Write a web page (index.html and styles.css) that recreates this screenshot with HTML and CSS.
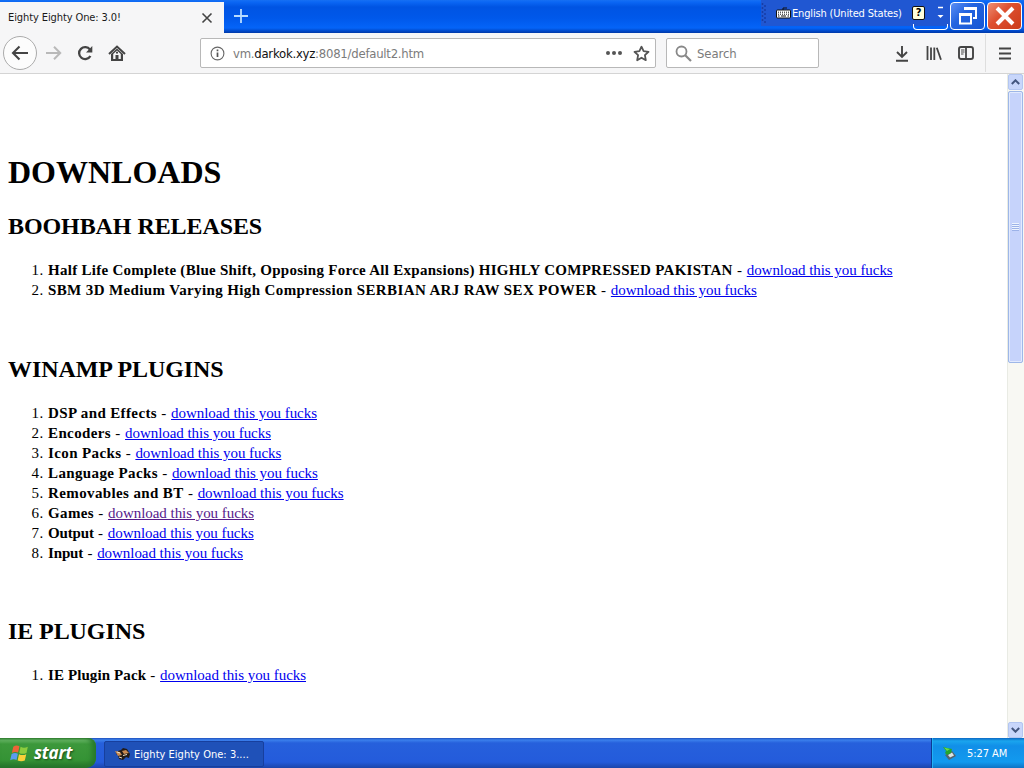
FILE: index.html
```
<!DOCTYPE html>
<html lang="en">
<head>
    <meta charset="UTF-8">
    <title>Eighty Eighty One: 3.0!</title>
    <link rel="stylesheet" href="styles.css">
</head>
<body>
    <div class="titlebar">
        <div class="tab">
            <span class="tab-title">Eighty Eighty One: 3.0!</span>
            <svg class="tab-close" width="12" height="12" viewBox="0 0 12 12"><path d="M1.5 1.5l9 9M10.5 1.5l-9 9" stroke="#444" stroke-width="1.6" fill="none"/></svg>
        </div>
        <svg class="new-tab" width="16" height="16" viewBox="0 0 16 16"><path d="M8 1v14M1 8h14" stroke="#b8dcff" stroke-width="1.8"/></svg>
        <div class="langbar">
            <svg class="grip" width="5" height="22" viewBox="0 0 5 22"><path d="M1.5 1v20M4 3v18" stroke="#173da5" stroke-width="1.5" stroke-dasharray="2 2"/></svg>
            <svg class="keyboard" width="15" height="12" viewBox="0 0 15 12"><path d="M7 3V1h4" stroke="#111" fill="none"/><rect x=".5" y="3" width="14" height="8" rx="1" fill="#fff" stroke="#111"/><path d="M2 5.2h11M2 7.2h11" stroke="#111" stroke-dasharray="1 1"/><path d="M2 9h1.5M5 9h5M11.5 9h1.5" stroke="#111"/></svg>
            <span class="lang">English (United States)</span>
            <span class="help">?</span>
            <svg class="lang-arrows" width="7" height="14" viewBox="0 0 7 14"><path d="M1 1.5h5" stroke="#fff" stroke-width="1.5"/><path d="M.5 9h6l-3 3z" fill="#fff"/></svg>
        </div>
        <div class="win-btn minimize"></div>
        <div class="win-btn restore">
            <svg width="24" height="24" viewBox="0 0 24 24"><path d="M9 5h11v9h-3" stroke="#fff" stroke-width="2" fill="none"/><rect x="4" y="10.5" width="11" height="9" stroke="#fff" stroke-width="2" fill="none"/><path d="M3 10.5h13M8 4.5h13" stroke="#fff" stroke-width="3"/></svg>
        </div>
        <div class="win-btn close">
            <svg width="26" height="24" viewBox="0 0 26 24"><path d="M5 4l16 16M21 4L5 20" stroke="#fff" stroke-width="4"/></svg>
        </div>
    </div>

    <div class="toolbar">
        <div class="back">
            <svg width="18" height="16" viewBox="0 0 18 16"><path d="M17 8H2M8.5 1.5L2 8l6.5 6.5" stroke="#444" stroke-width="2.1" fill="none"/></svg>
        </div>
        <svg class="forward" width="16" height="16" viewBox="0 0 16 16"><path d="M0 8h14M8 1.8L14.2 8 8 14.2" stroke="#b9b9b9" stroke-width="2" fill="none"/></svg>
        <svg class="reload" width="16" height="16" viewBox="0 0 16 16"><path d="M13 4.6A6 6 0 1 0 13.4 11" stroke="#444" stroke-width="2.3" fill="none"/><path d="M15.3 1v6.5H9z" fill="#444"/></svg>
        <svg class="home" width="18" height="17" viewBox="0 0 18 17"><path d="M1 9l8-7.5L17 9" stroke="#444" stroke-width="2" fill="none"/><path fill-rule="evenodd" d="M3 9l6-5.6L15 9v7H3zM5.2 9v5h2.3v-4h3v4h2.3V9L9 5.6z" fill="#444"/><path d="M8 6.8h2v1.8H8z" fill="#444"/></svg>
        <div class="urlbar">
            <svg width="15" height="15" viewBox="0 0 15 15"><circle cx="7.5" cy="7.5" r="6.4" stroke="#666" stroke-width="1.1" fill="none"/><path d="M7.5 6.4V11M7.5 3.6v1.7" stroke="#555" stroke-width="1.7"/></svg>
            <span class="url">vm.<span class="host">darkok.xyz</span>:8081/default2.htm</span>
            <svg class="dots" width="18" height="6" viewBox="0 0 18 6"><circle cx="3" cy="3" r="2" fill="#555"/><circle cx="9" cy="3" r="2" fill="#555"/><circle cx="15" cy="3" r="2" fill="#555"/></svg>
            <svg class="star" width="17" height="17" viewBox="0 0 17 17"><path d="M8.5 1.7l2.1 4.5 4.9.6-3.6 3.4.9 5-4.3-2.5-4.3 2.5.9-5L1.5 6.8l4.9-.6z" stroke="#555" stroke-width="1.8" stroke-linejoin="round" fill="none"/></svg>
        </div>
        <div class="searchbar">
            <svg width="17" height="17" viewBox="0 0 17 17"><circle cx="6.5" cy="6.5" r="5" stroke="#888" stroke-width="1.8" fill="none"/><path d="M10.2 10.2l5.8 5.8" stroke="#888" stroke-width="2.2"/></svg>
            <span class="placeholder">Search</span>
        </div>
        <div class="tools">
            <svg width="16" height="17" viewBox="0 0 16 17"><path d="M8 1v11M3 7l5 5 5-5M2 15.8h12" stroke="#444" stroke-width="1.9" fill="none"/></svg>
            <svg width="16" height="16" viewBox="0 0 16 16"><path d="M1.5 1v14M5 2.5V15M8.3 2.5V15M10.8 2.7l4.2 12" stroke="#444" stroke-width="1.8" fill="none"/></svg>
            <svg width="16" height="16" viewBox="0 0 16 16"><rect x="1" y="2" width="14" height="12" rx="2" stroke="#444" stroke-width="1.9" fill="none"/><path d="M8 2v12" stroke="#444" stroke-width="1.8"/><path d="M3 5h3.5M3 7h3.5M3 9h2.5" stroke="#444"/></svg>
        </div>
        <div class="menu">
            <svg width="14" height="13" viewBox="0 0 14 13"><path d="M1 1.5h12M1 6.5h12M1 11.5h12" stroke="#444" stroke-width="1.9"/></svg>
        </div>
    </div>

    <div class="viewport">
        <div class="page">
            <h1>DOWNLOADS</h1>
            <h2>BOOHBAH RELEASES</h2>
            <ol>
                <li><b class="long">Half Life Complete (Blue Shift, Opposing Force All Expansions) HIGHLY COMPRESSED PAKISTAN</b> - <a href="#">download this you fucks</a></li>
                <li><b>SBM 3D Medium Varying High Compression SERBIAN ARJ RAW SEX POWER</b> - <a href="#">download this you fucks</a></li>
            </ol>
            <br>
            <h2>WINAMP PLUGINS</h2>
            <ol>
                <li><b>DSP and Effects</b> - <a href="#">download this you fucks</a></li>
                <li><b>Encoders</b> - <a href="#">download this you fucks</a></li>
                <li><b>Icon Packs</b> - <a href="#">download this you fucks</a></li>
                <li><b>Language Packs</b> - <a href="#">download this you fucks</a></li>
                <li><b>Removables and BT</b> - <a href="#">download this you fucks</a></li>
                <li><b>Games</b> - <a class="visited" href="#">download this you fucks</a></li>
                <li><b class="tight">Output</b> - <a href="#">download this you fucks</a></li>
                <li><b class="tight">Input</b> - <a href="#">download this you fucks</a></li>
            </ol>
            <br>
            <h2>IE PLUGINS</h2>
            <ol>
                <li><b class="pack">IE Plugin Pack</b> - <a href="#">download this you fucks</a></li>
            </ol>
        </div>
        <div class="scrollbar">
            <div class="scroll-btn"><svg width="9" height="6" viewBox="0 0 9 6"><path d="M.8 5l3.7-3.7L8.2 5" stroke="#43567f" stroke-width="2" fill="none"/></svg></div>
            <div class="thumb"><span class="thumb-grip"></span></div>
            <div class="scroll-btn last"><svg width="9" height="6" viewBox="0 0 9 6"><path d="M.8 1l3.7 3.7L8.2 1" stroke="#43567f" stroke-width="2" fill="none"/></svg></div>
        </div>
    </div>

    <div class="taskbar">
        <div class="start">
            <svg width="20" height="19" viewBox="1 0 17 17"><path d="M3.5 2.5Q6 .5 9 2L7.8 7.7Q5 6.3 2.2 8z" fill="#ee6338"/><path d="M10 2.5q3 1.5 6.5 0L15.3 8q-3.3 1.5-6.5 0z" fill="#8ccc3e"/><path d="M2 9q2.8-1.7 5.6-.3L6.4 14.4q-2.7-1.4-5.7.2z" fill="#5c9cf0"/><path d="M8.6 9.1q3.2 1.5 6.5 0l-1.3 5.7q-3.2 1.4-6.4 0z" fill="#fad039"/></svg>
            <span class="start-text">start</span>
        </div>
        <div class="task">
            <svg width="16" height="14" viewBox="0 0 16 14"><path d="M3 4l3-1 2-2 4 1 3 5-1 4-3-1-3 3-4-1-1-4-2-1z" fill="#241b17"/><path d="M0 4l5 1 2 3-4 1zM7 4l4-1 3 3-5 1z" fill="#c98a50"/><path d="M2 5l3 1M8 8.5l4-1M4 10l3 1" stroke="#eee0c5"/></svg>
            <span>Eighty Eighty One: 3....</span>
        </div>
        <div class="tray">
            <svg width="15" height="15" viewBox="0 0 15 15"><path d="M3 9l7-4 4 5-7 4z" fill="#56636c"/><path d="M6 9l4-2.5 2 3-4 2z" fill="#dbe4e5"/><path d="M1 1l9 2-1 4-4 2-2-2 1-2z" fill="#25a52e"/><path d="M2 1.5l6 1.5-3 2z" fill="#65dc4c"/></svg>
            <span class="clock">5:27 AM</span>
        </div>
    </div>
</body>
</html>
```

FILE: styles.css
```
* {
    box-sizing: border-box;
}
body {
    margin: 0;
    width: 1024px;
    height: 768px;
    overflow: hidden;
    display: flex;
    flex-direction: column;
    background-color: white;
    font-family: "DejaVu Sans Condensed", "DejaVu Sans", sans-serif;
    font-stretch: condensed;
    font-size: 11px;
}
svg {
    display: block;
    flex: none;
}

/* title bar */
.titlebar {
    height: 33px;
    flex: none;
    display: flex;
    align-items: flex-start;
    background: linear-gradient(#1670f3 0, #0b67f4 2px, #0054e3 7px, #0058ea 18px, #0464f8 28px, #0048c8 31px, #0039a8 33px);
}
.tab {
    width: 224px;
    height: 31px;
    margin-top: 2px;
    padding: 0 11px 0 8px;
    display: flex;
    align-items: center;
    justify-content: space-between;
    background-color: #f6f6f7;
    color: #1a1a1a;
}
.tab-title {
    letter-spacing: -0.1px;
}
.new-tab {
    margin: 8px 0 0 9px;
}
.langbar {
    width: 189px;
    height: 26px;
    margin-left: auto;
    display: flex;
    align-items: center;
    background-color: #2057d2;
    color: white;
}
.keyboard {
    margin-left: 10px;
}
.lang {
    width: 121px;
    padding-left: 1px;
    white-space: nowrap;
    letter-spacing: -0.17px;
}
.help {
    width: 13px;
    height: 14px;
    border: 1px solid #111;
    border-radius: 2px;
    background-color: #ffffdc;
    color: black;
    font-weight: bold;
    line-height: 12px;
    text-align: center;
}
.lang-arrows {
    margin-left: 12px;
}
.win-btn {
    width: 35px;
    height: 28px;
    margin: 2px 2px 0 0;
    display: flex;
    align-items: center;
    justify-content: center;
    border: 1px solid white;
    border-radius: 4px;
}
.minimize {
    width: 35px;
    height: 6px;
    margin: 24px 2px 0 -37px;
    border-top: none;
    border-radius: 0 0 4px 4px;
}
.restore {
    background: linear-gradient(135deg, #5b8ff4, #2464e0 40%, #1556d4);
}
.close {
    margin-right: 2px;
    background: linear-gradient(135deg, #ed8f74, #de5131 40%, #cb3b18);
}

/* navigation */
.toolbar {
    height: 41px;
    flex: none;
    display: flex;
    align-items: center;
    border-bottom: 1px solid #d4d4d4;
    background-color: #f6f6f7;
}
.back {
    width: 34px;
    height: 34px;
    margin-left: 3px;
    display: flex;
    align-items: center;
    justify-content: center;
    border: 1px solid #ababab;
    border-radius: 50%;
    background-color: #fcfcfc;
}
.forward {
    margin-left: 9px;
}
.reload {
    margin-left: 15px;
}
.home {
    margin-left: 15px;
}
.urlbar, .searchbar {
    height: 30px;
    display: flex;
    align-items: center;
    border: 1px solid #b8b8b8;
    border-radius: 2px;
    background-color: white;
    color: #7b7b7b;
    font-size: 13px;
}
.urlbar {
    width: 456px;
    margin-left: 74px;
    padding: 0 5px 0 9px;
}
.url {
    margin-left: 8px;
    letter-spacing: -0.25px;
}
.host {
    color: #111;
}
.dots {
    margin-left: auto;
}
.star {
    margin-left: 10px;
}
.searchbar {
    width: 153px;
    margin-left: 10px;
    padding-left: 8px;
}
.placeholder {
    margin-left: 5px;
    letter-spacing: -0.1px;
}
.tools {
    margin-left: auto;
    display: flex;
    align-items: center;
    gap: 16px;
}
.menu {
    width: 39px;
    height: 38px;
    margin-left: 11px;
    padding-left: 12px;
    display: flex;
    align-items: center;
    border-left: 1px solid #dedede;
}

/* page */
.viewport {
    height: 664px;
    flex: none;
    display: flex;
}
.page {
    flex: 1;
    padding: 80px 8px 0;
    overflow: hidden;
    color: black;
    font-family: "Liberation Serif", serif;
    font-size: 16px;
    line-height: 20px;
}
h1 {
    margin: 0 0 22px;
    font-size: 32px;
    line-height: 37px;
}
h2 {
    margin: 20px 0;
    font-size: 24px;
    line-height: 27px;
    letter-spacing: -0.08px;
}
h2:last-of-type {
    margin-top: 19px;
}
ol {
    margin: 16px 0;
    padding-left: 40px;
    font-size: 15px;
}
li {
    letter-spacing: 0.5px;
}
b {
    letter-spacing: 0.38px;
}
.long {
    letter-spacing: 0.28px;
}
.pack {
    letter-spacing: 0.1px;
}
.tight {
    letter-spacing: -0.15px;
}
a {
    color: #0000ee;
    letter-spacing: -0.05px;
}
.visited {
    color: #551a8b;
}
.scrollbar {
    width: 17px;
    display: flex;
    flex-direction: column;
    border-left: 1px solid #e9ebe4;
    background-color: #f8f8f3;
}
.scroll-btn {
    width: 15px;
    height: 16px;
    display: flex;
    align-items: center;
    justify-content: center;
    border: 1px solid #b3c6f1;
    border-radius: 2px;
    background-color: #c8d6fb;
}
.last {
    margin-top: auto;
}
.thumb {
    width: 15px;
    height: 272px;
    margin-top: 1px;
    display: flex;
    align-items: center;
    justify-content: center;
    border: 1px solid #9eb7e8;
    border-radius: 2px;
    background-color: #c6d3fb;
    box-shadow: inset 0 0 0 1px #e2eafe;
}
.thumb-grip {
    width: 7px;
    height: 8px;
    background: repeating-linear-gradient(#eef4fe 0 1px, #9cb2e8 1px 2px);
}

/* taskbar */
.taskbar {
    height: 30px;
    flex: none;
    display: flex;
    background: linear-gradient(#1f50bd 0, #3b80ec 2px, #2660dc 5px, #245bdb 24px, #1c45aa 30px);
    color: white;
}
.start {
    width: 96px;
    padding-left: 10px;
    display: flex;
    align-items: center;
    border-radius: 0 8px 10px 0;
    background: linear-gradient(#347d32 0, #68b866 2px, #3c983b 6px, #359335 22px, #23702a 30px);
    box-shadow: inset -4px 0 5px #27792b;
}
.start-text {
    margin: -2px 0 0 4px;
    font-family: "Open Sans", sans-serif;
    font-stretch: normal;
    font-size: 17px;
    font-style: italic;
    font-weight: bold;
    letter-spacing: -0.2px;
    text-shadow: 1px 1px 2px #174b18;
}
.task {
    width: 160px;
    height: 26px;
    margin: 3px 0 0 8px;
    padding-left: 10px;
    display: flex;
    align-items: center;
    gap: 3px;
    border: 1px solid #173f9d;
    border-radius: 2px;
    background-color: #1f51b8;
    white-space: nowrap;
    letter-spacing: 0.02px;
}
.tray {
    width: 93px;
    margin-left: auto;
    padding-left: 10px;
    display: flex;
    align-items: center;
    border-left: 1px solid #0b3b93;
    background: linear-gradient(#0c68c3 0, #1aa5ee 3px, #118fe8 8px, #129aef 24px, #0e73c4 30px);
    box-shadow: inset 1px 0 #22b2f6;
}
.clock {
    margin-left: 10px;
    letter-spacing: -0.05px;
}
```
